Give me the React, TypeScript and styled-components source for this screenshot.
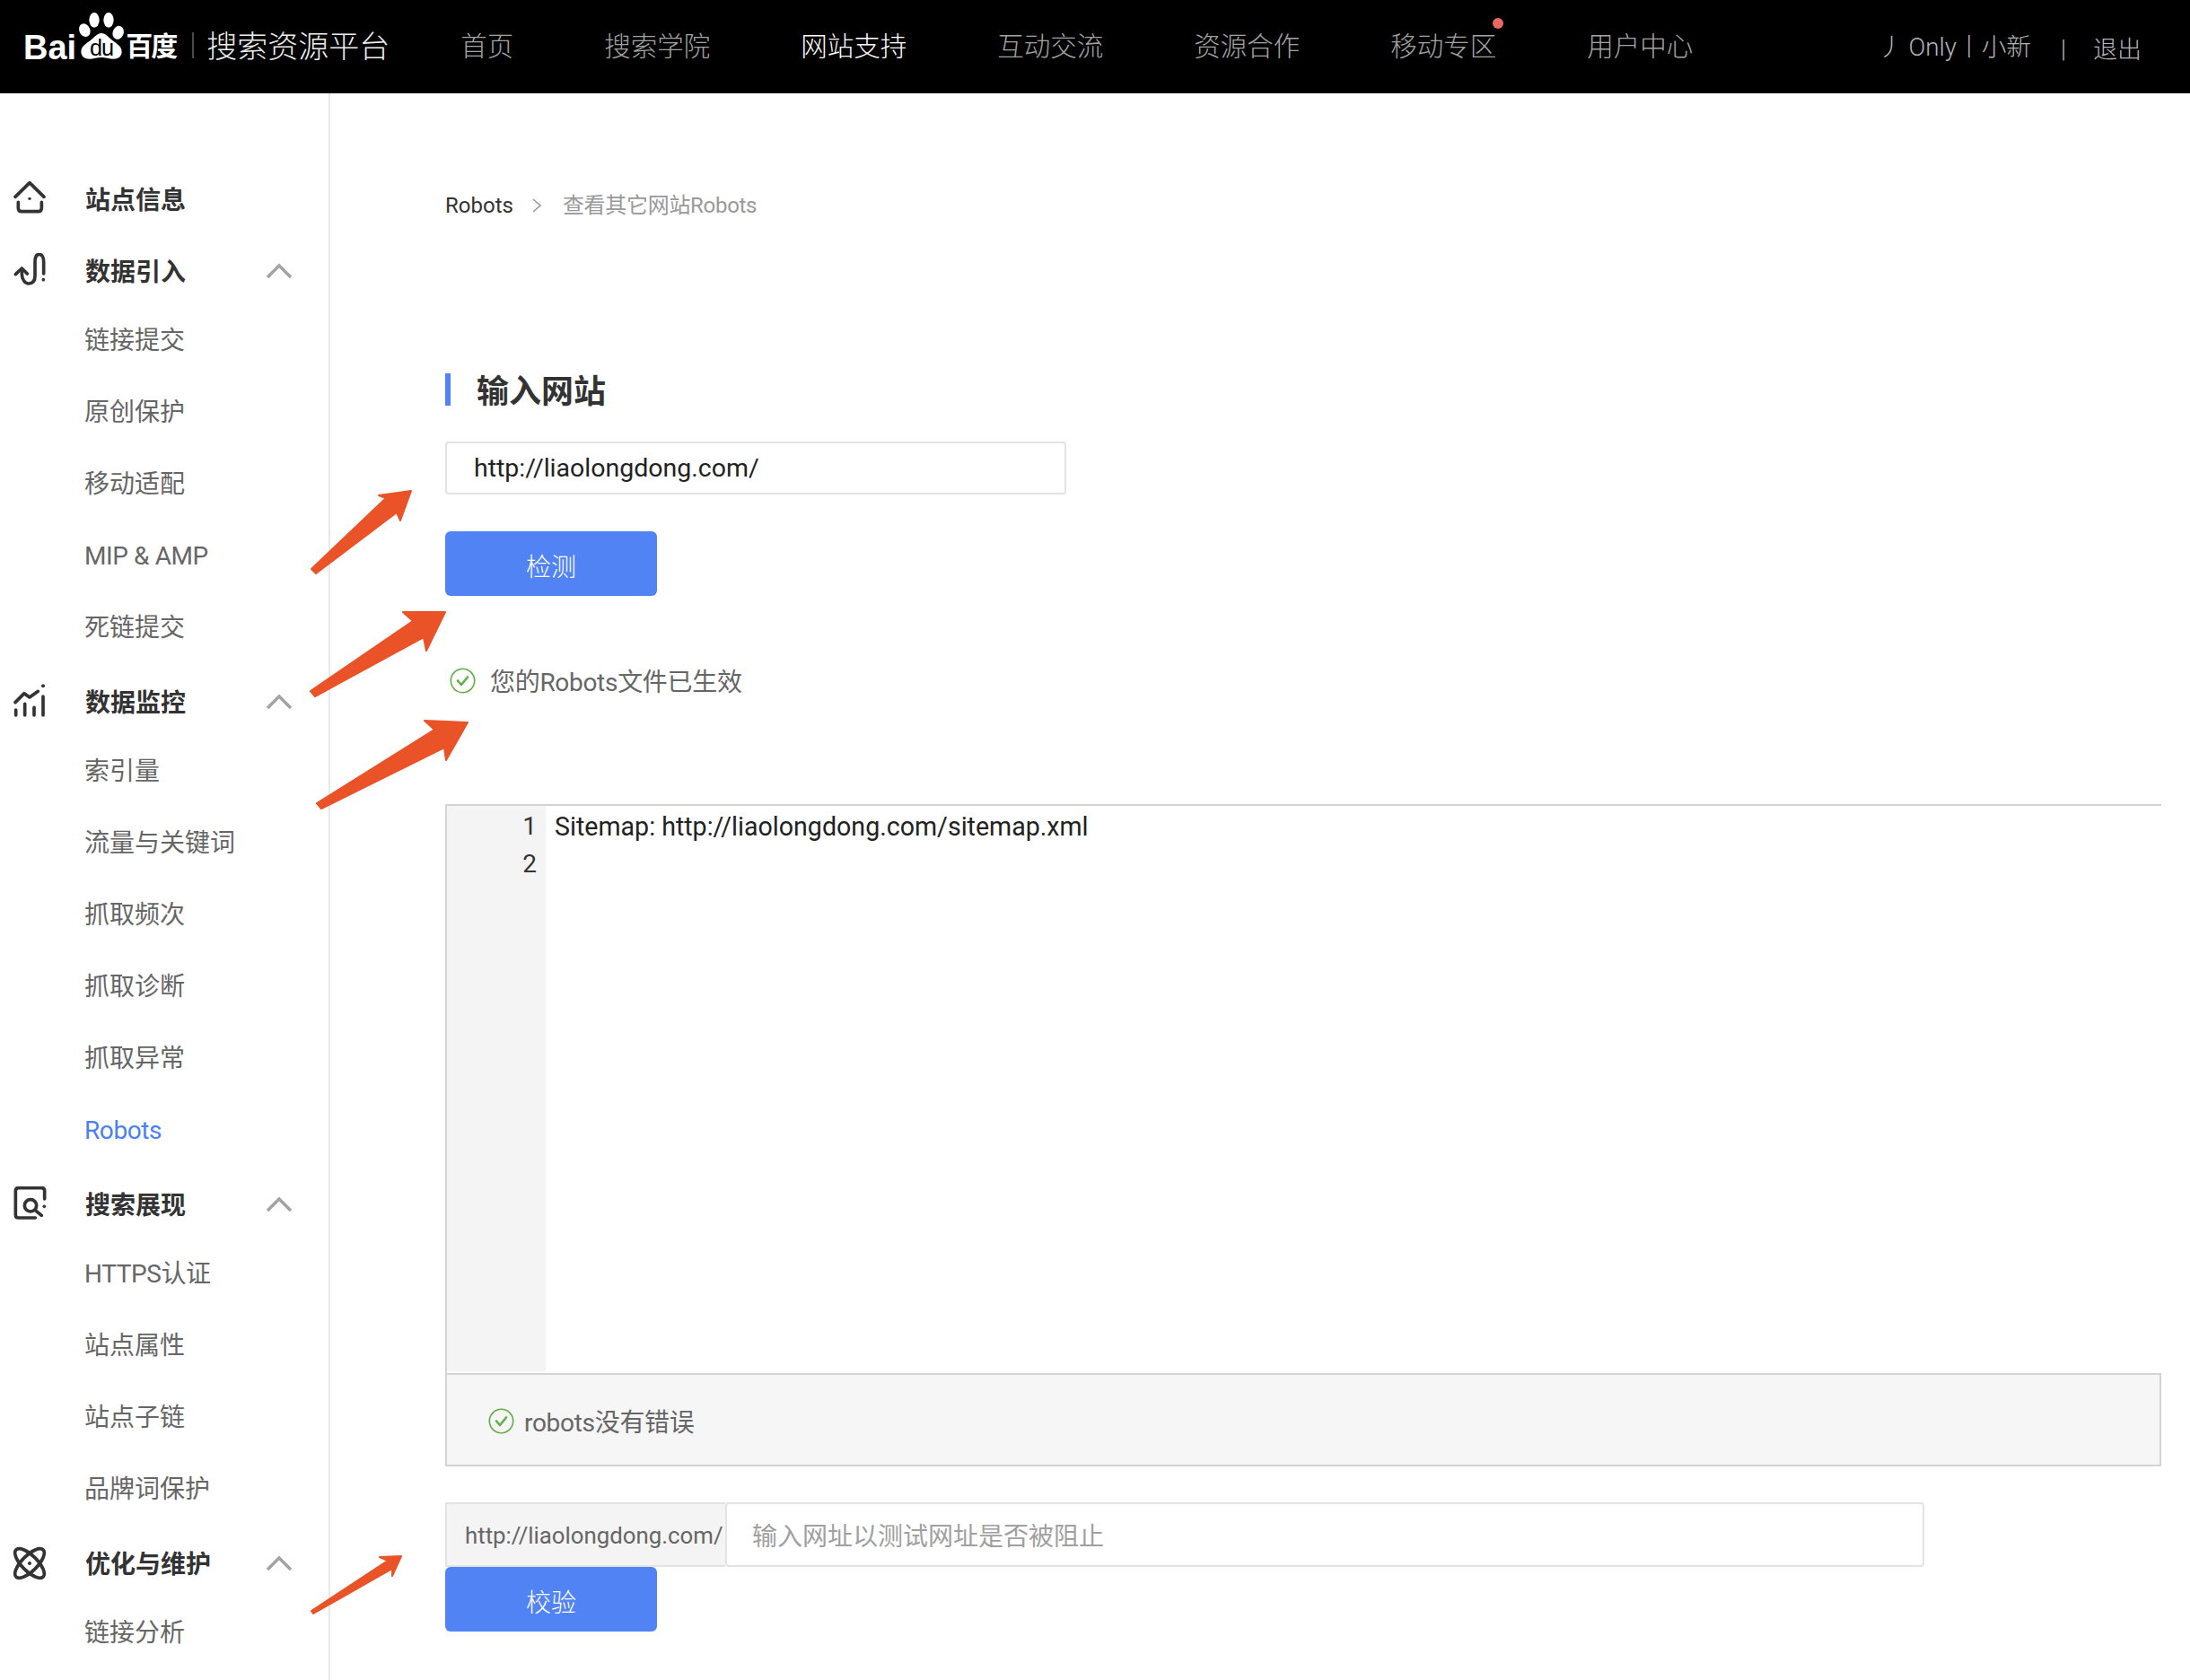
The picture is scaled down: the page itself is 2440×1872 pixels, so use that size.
import React from "react";
import styled, { createGlobalStyle } from "styled-components";

const FONT = `Roboto, "Noto Sans CJK SC", "Noto Sans", sans-serif`;

const Global = createGlobalStyle`
  html, body { margin: 0; padding: 0; background: #fff; }
  body { font-family: ${FONT}; }
  * { box-sizing: border-box; }
`;

const Page = styled.div`
  position: relative;
  width: 2440px;
  height: 1872px;
  overflow: hidden;
  display: flex;
  flex-direction: column;
  background: #fff;
`;

const Header = styled.header`
  height: 104px;
  flex: none;
  display: flex;
  background: #000;
  padding: 0 54px 0 26px;
  line-height: 105px;
`;

const Logo = styled.div`
  display: flex;
  align-items: flex-end;
  height: 53px;
  margin-top: 12px;
  line-height: 1;
  color: #fff;
`;

const LogoLatin = styled.span`
  font-family: "Liberation Sans", sans-serif;
  font-weight: 700;
  font-size: 38px;
  line-height: 38px;
  margin-bottom: -7px;
`;

const LogoCjk = styled.span`
  font-weight: 700;
  font-size: 30px;
  line-height: 30px;
  letter-spacing: -2px;
  margin: 0 0 -2px 1px;
  white-space: nowrap;
`;

const LogoSep = styled.i`
  width: 2px;
  height: 29px;
  margin: 36px 0 0 18px;
  background: #4a4a4a;
`;

const BrandTitle = styled.div`
  margin-left: 14px;
  font-size: 34px;
  font-weight: 300;
  color: #eee;
  white-space: nowrap;
`;

const Nav = styled.nav`
  display: flex;
  gap: 101px;
  margin-left: 79px;
`;

const NavItem = styled.a<{ $active?: boolean }>`
  position: relative;
  font-size: 29.5px;
  font-weight: 300;
  white-space: nowrap;
  color: ${(p) => (p.$active ? "#fff" : "#a3a3a3")};
`;

const NavDot = styled.i`
  position: absolute;
  top: 20px;
  right: -8px;
  width: 12px;
  height: 12px;
  border-radius: 50%;
  background: #e96a63;
`;

const UserArea = styled.div`
  margin-left: auto;
  display: flex;
  align-items: center;
  color: #b5b5b5;
  font-size: 27px;
  font-weight: 300;
  white-space: nowrap;
`;

const UserName = styled.span`
  font-size: 27.7px;
`;

const UserDivider = styled.span`
  margin: 0 30px 0 33px;
  padding-top: 6px;
`;

const Logout = styled.span`
  padding-top: 9px;
`;

const Body = styled.div`
  flex: 1;
  display: flex;
  min-height: 0;
`;

const Sidebar = styled.aside`
  width: 368px;
  flex: none;
  padding-top: 81px;
  border-right: 2px solid #e8e8e8;
  display: flex;
  flex-direction: column;
  gap: 6px;
`;

const Group = styled.section`
  display: flex;
  flex-direction: column;
`;

const GroupHead = styled.div`
  height: 74px;
  display: flex;
  align-items: center;
  padding-left: 13px;
  color: #333;
`;

const GroupIcon = styled.svg`
  width: 40px;
  height: 40px;
  flex: none;
  fill: none;
  stroke: #333;
  stroke-width: 11;
  stroke-linecap: round;
  stroke-linejoin: round;
`;

const GroupLabel = styled.span`
  margin-left: 42px;
  padding-bottom: 2px;
  font-size: 28px;
  font-weight: 700;
  white-space: nowrap;
`;

const Chevron = styled.svg`
  position: absolute;
  left: 295px;
  width: 32px;
  height: 18px;
  fill: none;
  stroke: #a3a3a3;
  stroke-width: 3.5;
`;

const GroupHeadWrap = styled.div`
  position: relative;
  display: flex;
  align-items: center;
`;

const SubItem = styled.a<{ $active?: boolean; $latin?: boolean }>`
  height: 80px;
  padding-left: 94px;
  font-size: 28px;
  line-height: 81px;
  letter-spacing: ${(p) => (p.$latin ? "-0.4px" : "0")};
  white-space: nowrap;
  color: ${(p) => (p.$active ? "#4a7ff5" : "#666")};
`;

const Main = styled.main`
  flex: 1;
  min-width: 0;
  padding: 105px 32px 0 128px;
  display: flex;
  flex-direction: column;
`;

const Crumbs = styled.div`
  height: 40px;
  display: flex;
  align-items: center;
  font-size: 24px;
  line-height: 40px;
  color: #333;
  white-space: nowrap;
`;

const CrumbSep = styled.svg`
  width: 12px;
  height: 18px;
  margin: 0 23px 0 20px;
  fill: none;
  stroke: #999;
  stroke-width: 1.6;
`;

const CrumbNow = styled.span`
  color: #999;
  letter-spacing: -0.3px;
`;

const SectionTitle = styled.h2`
  height: 36px;
  margin: 167px 0 0;
  padding-left: 29px;
  border-left: 6px solid #5283f5;
  font-size: 36px;
  line-height: 42px;
  font-weight: 700;
  color: #333;
`;

const UrlInput = styled.input`
  display: block;
  width: 692px;
  height: 59px;
  margin-top: 40px;
  padding: 0 0 0 30px;
  border: 2px solid #e3e3e3;
  border-radius: 4px;
  outline: 0;
  font-family: ${FONT};
  font-size: 28.5px;
  color: #222;
`;

const PrimaryButton = styled.button<{ $top?: number }>`
  display: block;
  width: 236px;
  height: 72px;
  margin-top: ${(p) => p.$top ?? 0}px;
  padding: 4px 0 0;
  border: 0;
  border-radius: 6px;
  background: #5283f5;
  color: #fff;
  font-family: ${FONT};
  font-size: 28px;
  font-weight: 300;
`;

const Status = styled.div`
  height: 40px;
  margin-top: 74px;
  padding-left: 5px;
  display: flex;
  align-items: center;
  gap: 16px;
  font-size: 28px;
  letter-spacing: -0.3px;
  color: #666;
  white-space: nowrap;
`;

const CheckIcon = styled.svg`
  width: 29px;
  height: 29px;
  flex: none;
  fill: none;
  stroke: #62ae47;
`;

const Editor = styled.div`
  height: 634px;
  margin-top: 118px;
  border-top: 2px solid #d4d4d4;
  border-left: 2px solid #d4d4d4;
  display: flex;
`;

const Gutter = styled.div`
  width: 110px;
  height: 630px;
  flex: none;
  padding: 2px 10px 0 0;
  background: #f4f4f4;
  text-align: right;
  font-size: 28px;
  line-height: 42px;
  color: #333;
`;

const Code = styled.div`
  padding: 2px 0 0 10px;
  font-size: 28.6px;
  line-height: 42px;
  color: #222;
  white-space: pre;
`;

const ResultPanel = styled.div`
  height: 104px;
  padding: 2px 0 0 46px;
  border: 2px solid #d4d4d4;
  background: #f6f6f6;
  display: flex;
  align-items: center;
  gap: 11px;
  font-size: 28px;
  letter-spacing: -0.3px;
  color: #666;
  white-space: nowrap;
`;

const TestRow = styled.div`
  height: 72px;
  margin-top: 40px;
  display: flex;
`;

const Prefix = styled.div`
  width: 312px;
  flex: none;
  padding-left: 20px;
  border: 2px solid #e3e3e3;
  border-right: 0;
  background: #f4f4f4;
  font-size: 25.8px;
  line-height: 70px;
  color: #666;
  white-space: nowrap;
`;

const PathInput = styled.input`
  width: 1336px;
  flex: none;
  padding: 4px 0 0 28px;
  border: 2px solid #e3e3e3;
  border-radius: 4px;
  outline: 0;
  font-family: ${FONT};
  font-size: 28px;
  &::placeholder { color: #a0a0a0; opacity: 1; }
`;

const ArrowLayer = styled.svg`
  position: absolute;
  left: 0;
  top: 0;
  width: 2440px;
  height: 1872px;
  pointer-events: none;
  fill: #ea5327;
  stroke: #ea5327;
  stroke-width: 2;
  stroke-linejoin: round;
`;

const Check = () => (
  <CheckIcon viewBox="0 0 29 29">
    <circle cx="14.5" cy="14.5" r="13.2" strokeWidth="1.6" />
    <path d="M9 14.5l4 4.5 7-8.5" strokeWidth="2.6" strokeLinecap="round" strokeLinejoin="round" />
  </CheckIcon>
);

const Paw = () => (
  <svg width="54" height="53" viewBox="0 0 162 159" style={{ flex: "none", marginBottom: -1 }}>
    <ellipse cx="60" cy="28" rx="17" ry="25" fill="#fff" />
    <ellipse cx="108" cy="28" rx="17" ry="25" fill="#fff" />
    <ellipse cx="28" cy="62" rx="18" ry="23" fill="#fff" transform="rotate(-25 28 62)" />
    <ellipse cx="140" cy="70" rx="18" ry="23" fill="#fff" transform="rotate(20 140 70)" />
    <path
      d="M84 72c-14 0-22 12-34 22-14 12-34 20-34 40 0 15 12 24 28 24 14 0 26-5 40-5s26 5 40 5c16 0 28-9 28-24 0-20-20-28-34-40-12-10-20-22-34-22z"
      fill="#fff"
    />
    <text x="84" y="146" textAnchor="middle" fontFamily="Liberation Sans, sans-serif" fontWeight="400" fontSize="76" fill="#000" letterSpacing="-3">
      du
    </text>
  </svg>
);

const icons: Record<string, React.ReactNode> = {
  home: (
    <GroupIcon viewBox="25 36 120 120">
      <path d="M37 88l48-47 48 47" />
      <path d="M47 106v19q0 12 12 12h54q12 0 12-12v-19" />
      <circle cx="85" cy="94" r="5" fill="#333" stroke="none" />
    </GroupIcon>
  ),
  link: (
    <GroupIcon viewBox="25 276 120 120">
      <path d="M59 330v15c0 20 11 33 23 33 13 0 21-8 21-26v-47c0-15 5-25 14-25s15 10 15 25v40" />
      <path d="M38 347l21-20 18 18" />
      <circle cx="131" cy="365" r="5.5" fill="#333" stroke="none" />
    </GroupIcon>
  ),
  chart: (
    <GroupIcon viewBox="25 33 120 120">
      <path d="M39 120v18M69 100v38M100 112v26M130 75v63" />
      <path d="M37 95l30-30 18 13 28-20" />
      <circle cx="130" cy="40" r="6" fill="#333" stroke="none" />
    </GroupIcon>
  ),
  search: (
    <GroupIcon viewBox="25 33 120 120">
      <path d="M135 75V48q0-10-10-10H48q-10 0-10 10v80q0 10 10 10h56" />
      <circle cx="88" cy="97" r="20" />
      <path d="M104 113l21 17" />
      <circle cx="134" cy="100" r="5.5" fill="#333" stroke="none" />
    </GroupIcon>
  ),
  atom: (
    <GroupIcon viewBox="25 6 120 120">
      <ellipse cx="85" cy="66" rx="64" ry="26" transform="rotate(45 85 66)" />
      <ellipse cx="85" cy="66" rx="64" ry="26" transform="rotate(-45 85 66)" />
      <circle cx="85" cy="66" r="6" fill="#333" stroke="none" />
    </GroupIcon>
  ),
};

type G = { icon: string; label: string; chevron?: boolean; subs: string[] };

const groups: G[] = [
  { icon: "home", label: "站点信息", subs: [] },
  { icon: "link", label: "数据引入", chevron: true, subs: ["链接提交", "原创保护", "移动适配", "MIP & AMP", "死链提交"] },
  { icon: "chart", label: "数据监控", chevron: true, subs: ["索引量", "流量与关键词", "抓取频次", "抓取诊断", "抓取异常", "Robots"] },
  { icon: "search", label: "搜索展现", chevron: true, subs: ["HTTPS认证", "站点属性", "站点子链", "品牌词保护"] },
  { icon: "atom", label: "优化与维护", chevron: true, subs: ["链接分析"] },
];

const navs = ["首页", "搜索学院", "网站支持", "互动交流", "资源合作", "移动专区", "用户中心"];

export default function App() {
  return (
    <Page>
      <Global />
      <Header>
        <Logo>
          <LogoLatin>Bai</LogoLatin>
          <Paw />
          <LogoCjk>百度</LogoCjk>
        </Logo>
        <LogoSep />
        <BrandTitle>搜索资源平台</BrandTitle>
        <Nav>
          {navs.map((n) => (
            <NavItem key={n} $active={n === "网站支持"}>
              {n}
              {n === "移动专区" && <NavDot />}
            </NavItem>
          ))}
        </Nav>
        <UserArea>
          <UserName>丿 Only丨小新</UserName>
          <UserDivider>|</UserDivider>
          <Logout>退出</Logout>
        </UserArea>
      </Header>
      <Body>
        <Sidebar>
          {groups.map((g) => (
            <Group key={g.label}>
              <GroupHeadWrap>
                <GroupHead>
                  {icons[g.icon]}
                  <GroupLabel>{g.label}</GroupLabel>
                </GroupHead>
                {g.chevron && (
                  <Chevron viewBox="0 0 32 18">
                    <path d="M3 16L16 3l13 13" />
                  </Chevron>
                )}
              </GroupHeadWrap>
              {g.subs.map((s) => (
                <SubItem key={s} $active={s === "Robots"} $latin={/^[A-Z]/.test(s)}>
                  {s}
                </SubItem>
              ))}
            </Group>
          ))}
        </Sidebar>
        <Main>
          <Crumbs>
            <span>Robots</span>
            <CrumbSep viewBox="0 0 12 18">
              <path d="M2 2l8 7-8 7" />
            </CrumbSep>
            <CrumbNow>查看其它网站Robots</CrumbNow>
          </Crumbs>
          <SectionTitle>输入网站</SectionTitle>
          <UrlInput readOnly value="http://liaolongdong.com/" />
          <PrimaryButton $top={41}>检测</PrimaryButton>
          <Status>
            <Check />
            <span>您的Robots文件已生效</span>
          </Status>
          <Editor>
            <Gutter>
              1
              <br />2
            </Gutter>
            <Code>Sitemap: http://liaolongdong.com/sitemap.xml</Code>
          </Editor>
          <ResultPanel>
            <Check />
            <span>robots没有错误</span>
          </ResultPanel>
          <TestRow>
            <Prefix>http://liaolongdong.com/</Prefix>
            <PathInput placeholder="输入网址以测试网址是否被阻止" />
          </TestRow>
          <PrimaryButton>校验</PrimaryButton>
        </Main>
      </Body>
      <ArrowLayer viewBox="0 0 2440 1872">
        <path d="M347 634L430 555L422 552L458 547L446 580L442 571L352 639Z" />
        <path d="M346 770L460 692L449 682L496 682L475 725L472 710L351 776Z" />
        <path d="M353 895L484 813L473 803L521 805L497 847L495 833L358 901Z" />
        <path d="M347 1795L432 1739L423 1735L447 1734L437 1756L437 1748L349 1798Z" />
      </ArrowLayer>
    </Page>
  );
}
